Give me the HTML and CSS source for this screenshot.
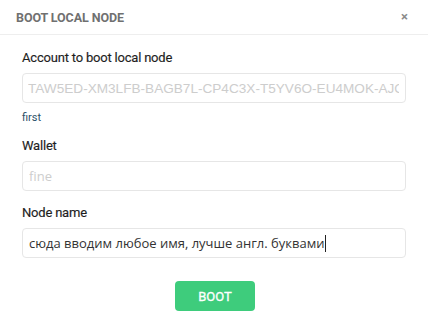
FILE: index.html
```
<!DOCTYPE html>
<html lang="en">
<head>
  <meta charset="UTF-8">
  <title>Boot local node</title>
  <link rel="stylesheet" href="styles.css">
</head>
<body>
  <div class="modal">
    <div class="modal-head">
      <span class="modal-title">BOOT LOCAL NODE</span>
      <span class="close-btn">×</span>
    </div>
    <div class="modal-body">
      <div class="field">
        <label class="field-label">Account to boot local node</label>
        <input class="field-input mono-ph" type="text" placeholder="TAW5ED-XM3LFB-BAGB7L-CP4C3X-T5YV6O-EU4MOK-AJOWQD">
        <div class="field-hint">first</div>
      </div>
      <div class="field">
        <label class="field-label">Wallet</label>
        <input class="field-input" type="text" placeholder="fine">
      </div>
      <div class="field">
        <label class="field-label">Node name</label>
        <div class="field-input filled">сюда вводим любое имя, лучше англ. буквами<span class="caret"></span></div>
      </div>
      <div class="actions">
        <button class="boot-btn">BOOT</button>
      </div>
    </div>
  </div>
</body>
</html>
```

FILE: styles.css
```
html, body {
  margin: 0;
  padding: 0;
  background: #fff;
  font-family: Roboto, 'Liberation Sans', Arial, sans-serif;
}
.modal {
  width: 428px;
  height: 332px;
  box-sizing: border-box;
}
.modal-head {
  display: flex;
  align-items: center;
  justify-content: space-between;
  height: 35px;
  padding: 0 20px 0 16px;
  border-bottom: 1px solid #eeeeee;
  box-sizing: border-box;
}
.modal-title {
  font-size: 12.5px;
  font-weight: bold;
  color: #707070;
  margin-top: 1px;
  letter-spacing: -0.1px;
}
.close-btn {
  font-size: 13px;
  font-weight: bold;
  color: #8a8a8a;
  line-height: 1;
  margin-top: -2px;
}
.modal-body {
  padding: 14px 22px 0 22px;
}
.field {
  display: flex;
  flex-direction: column;
  margin-bottom: 13px;
}
.field-label {
  font-size: 13px;
  font-weight: normal;
  color: #1e1e1e;
  line-height: 18px;
  margin-bottom: 6px;
  letter-spacing: -0.2px;
  -webkit-text-stroke: 0.15px #1e1e1e;
}
.field-input {
  height: 30px;
  width: 100%;
  box-sizing: border-box;
  border: 1px solid #e6e6e6;
  border-radius: 4px;
  padding: 0 6px;
  font-family: 'Open Sans', 'Noto Sans', sans-serif;
  font-size: 13px;
  color: #333;
  outline: none;
  background: #fff;
}
.field-input::placeholder {
  color: #cdcdcd;
}
.mono-ph {
  font-family: 'Liberation Sans', Arial, sans-serif;
  font-size: 13.6px;
  padding-left: 5px;
}
.filled {
  display: flex;
  align-items: center;
  white-space: nowrap;
  overflow: hidden;
}
.caret {
  display: inline-block;
  width: 1px;
  height: 17px;
  background: #222;
  margin-left: 1px;
}
.field-hint {
  font-size: 11px;
  color: #2c5068;
  margin-top: 8px;
  line-height: 13px;
}
.actions {
  display: flex;
  justify-content: center;
  margin-top: 23px;
}
.boot-btn {
  width: 80px;
  height: 30px;
  border: none;
  border-radius: 4px;
  background: #3ecc7c;
  color: #fff;
  font-family: Roboto, 'Liberation Sans', sans-serif;
  font-size: 13px;
  font-weight: normal;
  -webkit-text-stroke: 0.3px #fff;
  margin-left: 2px;
}
```
